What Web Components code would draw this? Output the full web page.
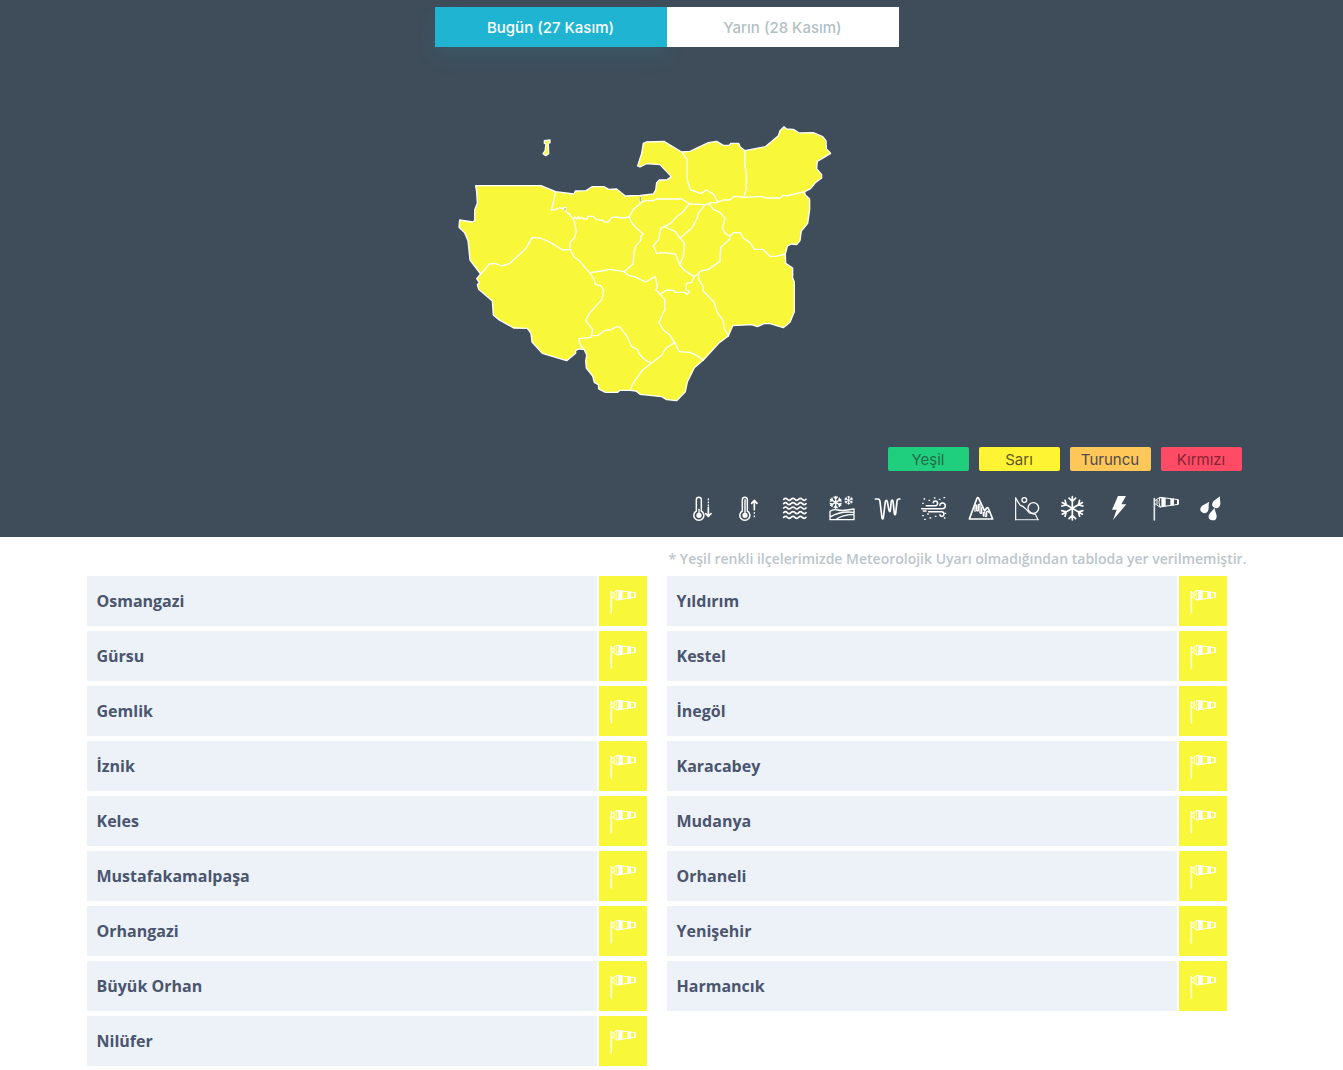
<!DOCTYPE html>
<html lang="tr">
<head>
<meta charset="utf-8">
<meta name="viewport" content="width=device-width, initial-scale=1">
<title>Meteorolojik Uyarılar</title>
<style>
body { margin: 0; background: #fff; font-family: "Open Sans", sans-serif; }
</style>
</head>
<body>
<warning-page></warning-page>
<script>
const define = (name, html, setup) => customElements.define(name, class extends HTMLElement {
  connectedCallback() {
    if (this.shadowRoot) return;
    this.attachShadow({ mode: 'open' }).innerHTML = html;
    if (setup) setup(this, this.shadowRoot);
  }
});

const arm = (r, w) => [0, 60, 120, 180, 240, 300].map(a =>
  `<path transform="rotate(${a})" d="M0 0V${-r}M${-r * .28} ${-r * .88}L0 ${-r * .6}L${r * .28} ${-r * .88}" stroke-width="${w}"/>`).join('');
const wave = y => `<path d="M5 ${y}q6 -6 11 0t11 0t12 0t11 0t11 0t11 0" stroke-width="5"/>`;
const thermometer = '<path d="M19 45V11a7.500 7.500 0 0 1 15 0V45a15 15 0 1 1-15 0z" stroke-width="4.500"/><circle cx="27" cy="58" r="6" fill="currentColor"/>';
const drop = (x, y, a) => `<path transform="translate(${x} ${y}) rotate(${a})" d="M0-21C4-10 12-3 12 5a12 12 0 0 1-24 0C-12-3-4-10 0-21z" fill="currentColor" stroke="none"/>`;

const ICONS = {
  cold: ['Soğuk', thermometer + '<path d="M27 40V56"/><path d="M55 34V60M47 53l8 8 8-8" stroke-width="5"/><path d="M55 9v2M55 18v2M55 27v2" stroke-width="4"/>'],
  hot: ['Sıcak', thermometer + '<path d="M27 12V56" stroke-width="6" opacity=".7"/><path d="M55 14V41M47 22l8-9 8 9" stroke-width="5"/><path d="M55 50v2M55 60v2" stroke-width="4"/>'],
  flood: ['Sel', [10, 23, 36, 50, 64].map(wave).join('')],
  snowfield: ['Kar', `<g transform="translate(20 19)">${arm(18, 4)}</g><g transform="translate(59 13)">${arm(12, 3)}</g><path d="M3 71V46Q13 38 27 42T75 39V71zM5 62Q35 44 74 49M20 71Q39 56 74 55"/>`],
  frost: ['Zirai don', '<path stroke-width="5" d="M1 9h8q5 0 6 8l6 49q2 6 4 0l6-49q3-8 6 0l5 27q3 6 4 0l3-29q3-6 5 0l4 38q2 6 4 0l4-37q1-7 5-7h4"/>'],
  dust: ['Toz taşınımı', '<path d="M2 38H64c12 0 12-17 0-17-5 0-8 3-7 7M16 29H43c9 0 9-14 0-14-4 0-6 2-6 5M23 47H62c9 0 9 14 1 14-4 0-6-2-6-5M7 45h8" stroke-width="4.500"/><path d="M9 9h2M24 13h2M40 6h2M55 10h2M69 5h2M5 22h2M5 59h2M20 54h2M27 66h2M43 61h2M70 66h2M72 52h2M11 70h2"/>'],
  avalanche: ['Çığ', '<path stroke-width="5" d="M4 69L27 7q2-4 5 0L50 45l6-9q3-3 5 1L74 69z"/><path d="M21 46V29q3-5 5 0V43q3 4 5 0V26q5-4 5 2V50q3 5 5 0V35M46 60V50q4-4 5 1v9q4 4 5-1V47q4-4 6 2"/>'],
  rockfall: ['Heyelan', '<path d="M5 71H72" opacity=".7"/><path d="M5 71V5Q9 14 19 28 30 30 46 51L64 55 72 71" stroke-width="3.500"/><circle cx="31" cy="12" r="7"/><circle cx="58" cy="36" r="16"/>'],
  snow: ['Buzlanma', `<g transform="translate(37 37)">${arm(35, 5)}</g>`],
  storm: ['Gök gürültülü fırtına', '<path d="M33 0H57L43 25H58L18 72 29 41H15z" fill="currentColor" stroke="none"/>'],
  wind: ['Rüzgar', '<path d="M4 8V72" stroke-width="5" opacity=".85"/><g stroke-width="3"><path d="M4 15L21 4 76 11V25L21 33 4 22M21 4Q14 18 21 33M61 9V27"/><path d="M25 4L38 6V31L25 33zM52 8L62 9V27L52 29zM72 11H77V25H72z" fill="currentColor" stroke="none"/><path d="M12 13V24"/></g>'],
  rain: ['Yağış', drop(19, 35, 32) + drop(54, 20, 25) + drop(42, 56, 12)]
};

define('weather-icon', `
<style>:host{display:block;width:26px;height:26px;color:#fff}svg{display:block;width:100%;height:100%;overflow:visible}</style>
<svg viewBox="0 0 78 78" role="img" fill="none" stroke="currentColor" stroke-width="4" stroke-linecap="round" stroke-linejoin="round"></svg>`,
(host, root) => {
  const [label, art] = ICONS[host.getAttribute('name')];
  const svg = root.querySelector('svg');
  svg.setAttribute('aria-label', label);
  svg.innerHTML = art;
});

define('day-tabs', `
<style>
:host{display:flex;justify-content:center;font-family:Inter,sans-serif}
button{box-sizing:border-box;width:232px;height:40px;padding:2px 0 0;border:0;background:#fff;color:#b3bfc3;font:500 15px/24px Inter,sans-serif;cursor:pointer}
button[aria-selected=true]{background:#1fb5d2;color:#fff;box-shadow:0 10px 20px rgba(31,181,210,.1)}
div{display:flex}
</style>
<div role="tablist"><button role="tab" aria-selected="true">Bugün (27 Kasım)</button><button role="tab" aria-selected="false">Yarın (28 Kasım)</button></div>`,
(host, root) => {
  const tabs = root.querySelectorAll('button');
  tabs.forEach(t => t.addEventListener('click', () => tabs.forEach(o => o.setAttribute('aria-selected', o === t))));
});

define('province-map', `
<style>:host{display:block}svg{display:block;width:434px;max-width:100%;margin:0 auto}</style>
<svg viewBox="0 0 1302 870" role="img" aria-label="Bursa ilçeleri" fill="none" stroke="#fff" stroke-width="4" stroke-linejoin="round" stroke-linecap="round">
<path fill="#f8f73a" d="M77 197L273 197 317 215 372 222 376 213 408 212 427 200 462 200 476 208 500 207 526 228 572 226 610 222 617 210 620 188 628 180 650 180 664 170 630 134 590 131 570 141 563 138 575 100 580 70 588 66 642 64 695 96 720 94 775 68 800 64 820 76 838 76 842 70 866 70 870 80 885 92 946 80 985 47 990 32 1002 20 1010 27 1030 28 1048 39 1090 38 1118 50 1128 62 1129 86 1142 100 1102 124 1100 146 1115 164 1115 174 1096 188 1082 206 1064 215 1065 224 1079 237 1079 268 1073 310 1054 333 1050 362 1040 374 1025 372 1012 378 1006 402 1007 430 1028 444 1028 474 1033 486 1033 575 1020 607 1000 623 960 611 942 611 922 620 905 614 848 617 835 648 808 668 760 720 733 743 712 786 706 815 680 842 650 839 635 830 570 823 558 813 540 811 510 811 503 817 466 817 446 807 445 794 433 787 428 768 409 744 407 723 410 705 402 688 386 687 377 692 377 700 350 722 277 700 246 666 243 640 232 625 191 624 145 598 130 585 127 543 86 508 82 494 88 488 80 476 92 462 60 420 54 362 44 338 27 322 29 300 68 306 74 302 74 270 82 250 80 215z"/>
<path fill="#f8f73a" d="M283 62L300 60 300 68 295 70 296 101 287 107 279 101 285 93 288 72 283 70z"/>
<path d="M317 215L311 244 304 270 316 269 330 263 342 268 341 263 348 262 347 275 360 284 370 297 375 312 379 334 374 352 361 366 360 388"/>
<path d="M92 462L106 447 118 432 135 430 155 438 180 430 228 385 246 353 270 354 297 365 338 390 360 388 372 410 388 422 407 445 419 458 433 480 436 493 452 497 461 512 456 538 418 580 407 602 428 628 423 652 386 656 391 675 402 687"/>
<path d="M426 647L445 646 462 632 480 630 500 620 510 622 532 650 545 680 562 688 568 702 588 722 605 729 578 750 550 788 540 811"/>
<path d="M605 729L636 705 648 684 674 668 688 695 720 697 740 706 760 720"/>
<path d="M674 668L660 646 640 630 627 607 644 570 644 538 630 523 618 510 622 500 616 470 605 475 588 486 570 478 553 470 535 466 522 455 480 448 455 453 419 458"/>
<path d="M522 455L550 431 552 395 557 378 572 362 572 350 580 342 560 325 548 312 537 291 550 268 578 245 588 241 610 242 620 237 695 237 720 252 765 254 785 248 800 248 820 240 838 240 853 229 885 232 935 229 948 234 990 234 1000 225 1008 228 1064 215"/>
<path d="M370 297L376 291 380 297 385 290 389 297 395 292 402 297 411 297 414 289 430 289 438 298 452 301 458 300 462 306 474 306 486 292 500 291 515 294 537 291M572 226L570 247"/>
<path d="M695 96L712 118 712 180 722 210 753 220 770 210 792 224 803 246M885 92L884 130 889 160 889 208 882 230"/>
<path d="M717 252L700 275 680 290 662 310 632 325 626 358 610 378 620 400 642 398 676 402 688 432 702 450 732 470M645 321L675 334 690 354 703 370 700 410 690 432M690 354L725 325 740 298 745 280 765 254"/>
<path d="M778 252L790 268 810 277 825 295 817 325 826 340 841 350 839 358 812 382 810 424 775 448 750 454 745 462 732 470 725 487 710 490 707 507 718 515 712 523 702 517 674 517 672 511 650 510 630 523"/>
<path d="M745 462L747 480 760 500 760 514 792 546 802 578 820 602 822 624 835 648M841 347L850 338 870 338 880 354 900 368 913 388 938 388 960 409 978 409 1006 402"/>
<path stroke="#5b6771" stroke-width="2" d="M571 232V243M345 265V269"/>
</svg>`);

define('severity-legend', `
<style>
:host{display:block}
ul{display:flex;justify-content:flex-end;gap:10px;margin:0;padding:0;list-style:none}
li{width:81px;height:24px;border-radius:2px;text-align:center;font:400 15px/25px Inter,sans-serif}
.green{background:#20cf7e;color:#226b48}.yellow{background:#fff433;color:#65552c}
.orange{background:#ffc658;color:#4c4b4d}.red{background:#ff4b65;color:#852536}
</style>
<ul><li class="green">Yeşil</li><li class="yellow">Sarı</li><li class="orange">Turuncu</li><li class="red">Kırmızı</li></ul>`);

define('icon-strip', `
<style>:host{display:flex;justify-content:flex-end}div{display:flex;justify-content:space-between;width:536px;max-width:100%}</style>
<div>${Object.keys(ICONS).map(n => `<weather-icon name="${n}"></weather-icon>`).join('')}</div>`);

define('district-row', `
<style>
:host{display:flex;gap:2px;height:50px}
.name{flex:1;padding:0 10px;background:#edf2f9;color:#4b556e;font:700 16px/50px "Open Sans",sans-serif}
.alert{box-sizing:border-box;display:flex;align-items:center;justify-content:center;width:48px;padding-top:2px;background:#f8f73a}
</style>
<span class="name"><slot></slot></span><span class="alert"><weather-icon name="wind"></weather-icon></span>`);

const DISTRICTS = ['Osmangazi', 'Yıldırım', 'Gürsu', 'Kestel', 'Gemlik', 'İnegöl', 'İznik', 'Karacabey', 'Keles', 'Mudanya',
  'Mustafakamalpaşa', 'Orhaneli', 'Orhangazi', 'Yenişehir', 'Büyük Orhan', 'Harmancık', 'Nilüfer'];
define('district-list', `
<style>
:host{display:block}
ul{display:grid;grid-template-columns:1fr 1fr;gap:5px 20px;margin:0;padding:0;list-style:none}
</style>
<ul>${DISTRICTS.map(d => `<li><district-row>${d}</district-row></li>`).join('')}</ul>`);

define('warning-page', `
<style>
:host{display:block}
header{background:#3f4d5a;padding:7px 0 15px}
.wrap{box-sizing:border-box;width:100%;max-width:1170px;margin:0 auto;padding-right:10px}
province-map{margin-top:73px}
severity-legend{margin-top:37px;padding-right:5px}
icon-strip{margin-top:25px;padding-right:21px}
p{margin:0;padding:10px 0 5px;text-align:right;color:#bcc5cb;font:600 14px/24px "Open Sans",sans-serif}
district-list{padding-right:20px}
main{padding-bottom:4px}
</style>
<header><div class="wrap"><day-tabs></day-tabs><province-map></province-map><severity-legend></severity-legend><icon-strip></icon-strip></div></header>
<main><div class="wrap"><p>* Yeşil renkli ilçelerimizde Meteorolojik Uyarı olmadığından tabloda yer verilmemiştir.</p><district-list></district-list></div></main>`);
</script>
</body>
</html>
